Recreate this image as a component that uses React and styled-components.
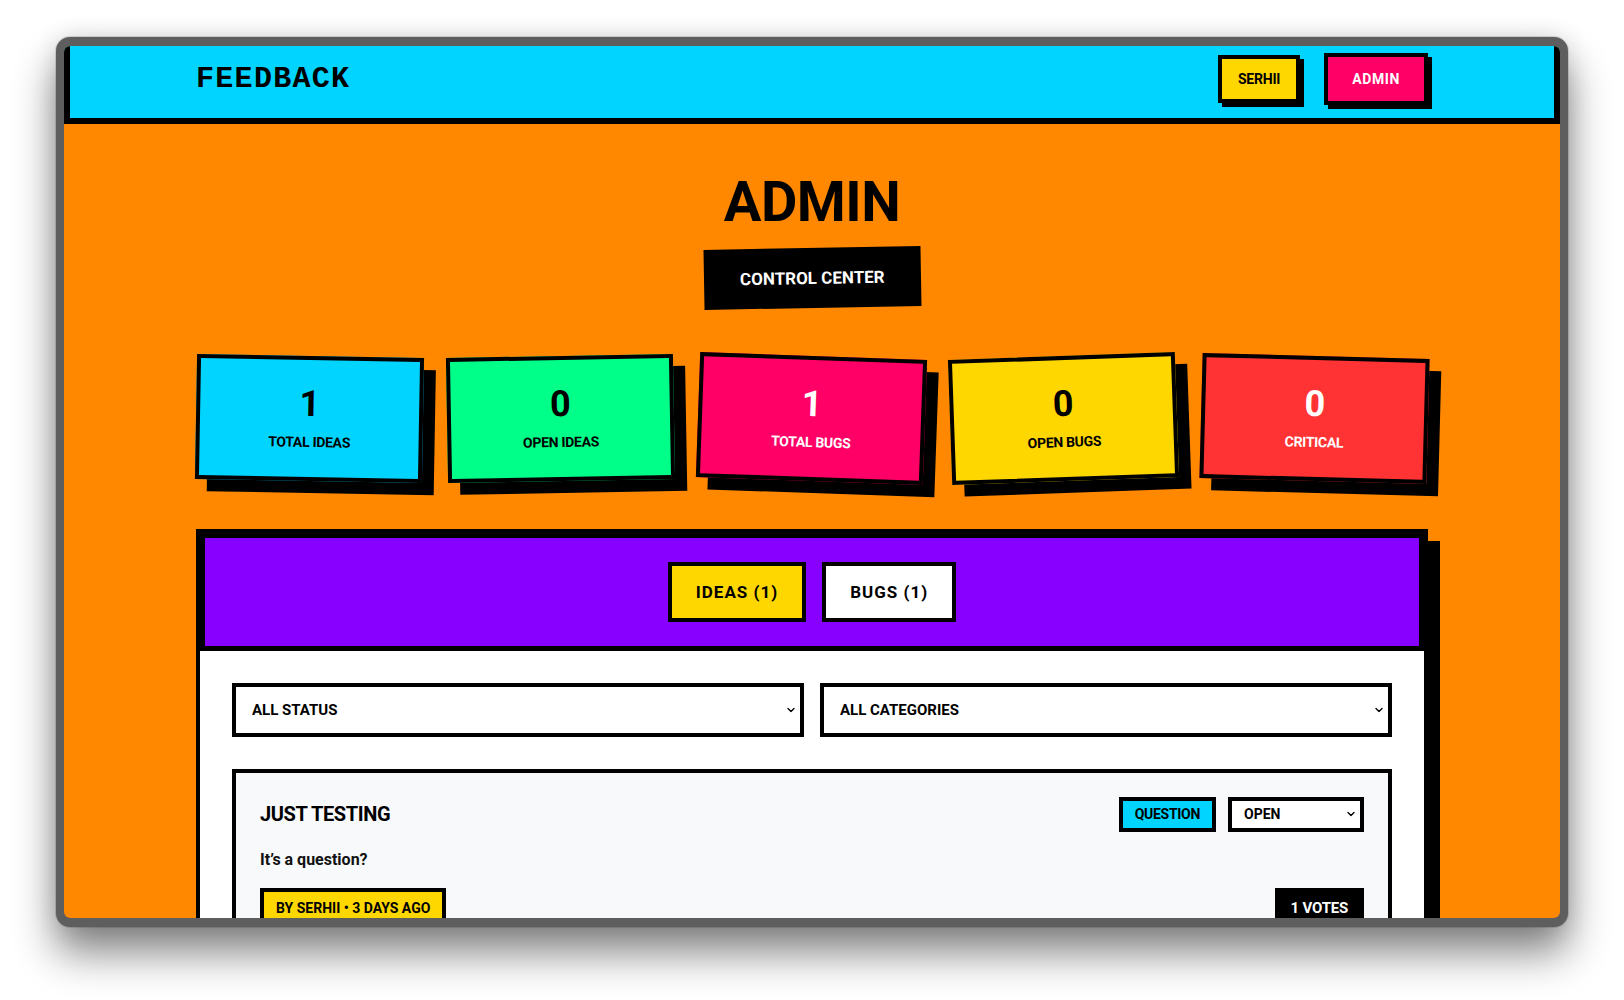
import React from 'react';
import styled, { createGlobalStyle } from 'styled-components';

const SANS = 'Roboto, "Liberation Sans", Arial, sans-serif';
const MONO = '"Liberation Mono", "DejaVu Sans Mono", monospace';

const GlobalStyle = createGlobalStyle`
  html, body {
    margin: 0;
    background: #ffffff;
  }
  * {
    box-sizing: border-box;
  }
`;

const stats = [
  { value: 1, label: 'Total Ideas', bg: '#00d4ff', fg: '#000', tilt: 1 },
  { value: 0, label: 'Open Ideas', bg: '#00ff88', fg: '#000', tilt: -1 },
  { value: 1, label: 'Total Bugs', bg: '#ff0066', fg: '#fff', tilt: 2 },
  { value: 0, label: 'Open Bugs', bg: '#ffd700', fg: '#000', tilt: -2 },
  { value: 0, label: 'Critical', bg: '#ff3333', fg: '#fff', tilt: 1.5 },
];

const ChevronIcon = () => (
  <svg width="8" height="5" viewBox="0 0 8 5" fill="none">
    <path d="M1 1l3 3 3-3" stroke="#000" strokeWidth="1.4" strokeLinecap="round" strokeLinejoin="round" />
  </svg>
);

const App = () => (
  <Page>
    <GlobalStyle />
    <Window>
      <Screen>
        <Header>
          <Container>
            <HeaderRow>
              <Logo>FEEDBACK</Logo>
              <Nav>
                <NavButton>SERHII</NavButton>
                <NavButton $admin>ADMIN</NavButton>
              </Nav>
            </HeaderRow>
          </Container>
        </Header>

        <Main>
          <Container>
            <Hero>
              <Title>ADMIN</Title>
              <Subtitle>CONTROL CENTER</Subtitle>
            </Hero>

            <StatsGrid>
              {stats.map((s) => (
                <StatCard key={s.label} $bg={s.bg} $fg={s.fg} $tilt={s.tilt}>
                  <StatNumber>{s.value}</StatNumber>
                  <StatLabel>{s.label}</StatLabel>
                </StatCard>
              ))}
            </StatsGrid>

            <Panel>
              <TabBar>
                <Tab $active>IDEAS (1)</Tab>
                <Tab>BUGS (1)</Tab>
              </TabBar>

              <PanelBody>
                <Filters>
                  <SelectWrap>
                    <Select defaultValue="all">
                      <option value="all">ALL STATUS</option>
                      <option value="open">OPEN</option>
                    </Select>
                    <Chevron>
                      <ChevronIcon />
                    </Chevron>
                  </SelectWrap>
                  <SelectWrap>
                    <Select defaultValue="all">
                      <option value="all">ALL CATEGORIES</option>
                      <option value="question">QUESTION</option>
                    </Select>
                    <Chevron>
                      <ChevronIcon />
                    </Chevron>
                  </SelectWrap>
                </Filters>

                <ItemCard>
                  <ItemHeader>
                    <ItemTitle>JUST TESTING</ItemTitle>
                    <ItemActions>
                      <CategoryBadge>QUESTION</CategoryBadge>
                      <SelectWrap $small>
                        <Select $small defaultValue="open">
                          <option value="open">OPEN</option>
                          <option value="done">DONE</option>
                        </Select>
                        <Chevron>
                          <ChevronIcon />
                        </Chevron>
                      </SelectWrap>
                    </ItemActions>
                  </ItemHeader>
                  <Description>It’s a question?</Description>
                  <ItemFooter>
                    <MetaBadge>BY SERHII • 3 DAYS AGO</MetaBadge>
                    <VotesBadge>1 VOTES</VotesBadge>
                  </ItemFooter>
                </ItemCard>
              </PanelBody>
            </Panel>
          </Container>
        </Main>
      </Screen>
    </Window>
  </Page>
);

const Page = styled.div`
  min-height: 100vh;
  padding: 37px 56px 0;
  font-family: ${SANS};
`;

const Window = styled.div`
  height: 890px;
  border: solid #5e5e5e;
  border-width: 9px 8px;
  border-radius: 14px;
  background: #5e5e5e;
  box-shadow: 0 26px 42px rgba(0, 0, 0, 0.48), 0 0 24px rgba(0, 0, 0, 0.12),
    0 0 0 1px rgba(0, 0, 0, 0.12);
  overflow: hidden;
`;

const Screen = styled.div`
  height: 100%;
  border-radius: 6px;
  overflow: hidden;
  background: #ff8800;
`;

const Header = styled.header`
  height: 78px;
  padding-bottom: 7px;
  display: flex;
  align-items: center;
  background: #00d4ff;
  border: 6px solid #000;
  border-top: none;
`;

const Container = styled.div`
  width: 100%;
  max-width: 1280px;
  margin: 0 auto;
  padding: 0 24px;
`;

const HeaderRow = styled.div`
  display: flex;
  align-items: center;
  justify-content: space-between;
`;

const Logo = styled.div`
  font-family: ${MONO};
  font-size: 30px;
  font-weight: 700;
  letter-spacing: 1.3px;
  color: #000;
`;

const Nav = styled.nav`
  display: flex;
  align-items: center;
  gap: 24px;
`;

const NavButton = styled.button`
  border: 4px solid #000;
  box-shadow: 4px 4px 0 #000;
  background: ${(p) => (p.$admin ? '#ff0066' : '#ffd700')};
  color: ${(p) => (p.$admin ? '#fff' : '#000')};
  font-family: ${SANS};
  font-size: 14px;
  font-weight: 700;
  letter-spacing: ${(p) => (p.$admin ? '0.6px' : '-0.2px')};
  line-height: 16px;
  padding: ${(p) => (p.$admin ? '14px 24px' : '12px 16px')};
  cursor: pointer;
`;

const Main = styled.main`
  padding: 50px 0 48px;
`;

const Hero = styled.div`
  display: flex;
  flex-direction: column;
  align-items: center;
`;

const Title = styled.h1`
  margin: 0 0 18px;
  font-size: 56px;
  line-height: 56px;
  font-weight: 700;
  letter-spacing: -0.5px;
  color: #000;
`;

const Subtitle = styled.div`
  background: #000;
  color: #fff;
  padding: 20px 36px;
  font-size: 17px;
  line-height: 20px;
  font-weight: 700;
  transform: rotate(-1deg);
`;

const StatsGrid = styled.div`
  display: grid;
  grid-template-columns: repeat(5, 1fr);
  gap: 24px;
  margin-top: 48px;
`;

const StatCard = styled.div`
  background: ${(p) => p.$bg};
  color: ${(p) => p.$fg};
  border: 4px solid #000;
  box-shadow: 12px 12px 0 #000;
  padding: 26px 16px;
  text-align: center;
  transform: rotate(${(p) => p.$tilt}deg);
`;

const StatNumber = styled.div`
  font-size: 36px;
  line-height: 36px;
  font-weight: 700;
`;

const StatLabel = styled.div`
  margin-top: 12px;
  font-size: 14px;
  line-height: 16.8px;
  font-weight: 700;
  text-transform: uppercase;
  letter-spacing: -0.3px;
`;

const Panel = styled.section`
  margin-top: 48px;
  background: #fff;
  border: 4px solid #000;
  box-shadow: 12px 12px 0 #000;
`;

const TabBar = styled.div`
  display: flex;
  justify-content: center;
  gap: 16px;
  padding: 24px;
  background: #8800ff;
  border: 5px solid #000;
`;

const Tab = styled.button`
  border: 4px solid #000;
  background: ${(p) => (p.$active ? '#ffd700' : '#fff')};
  color: #000;
  font-family: ${SANS};
  font-size: 17px;
  line-height: 16px;
  font-weight: 700;
  letter-spacing: 1px;
  padding: 18px 24px;
  cursor: pointer;
`;

const PanelBody = styled.div`
  padding: 32px;
`;

const Filters = styled.div`
  display: grid;
  grid-template-columns: 1fr 1fr;
  gap: 16px;
  margin-bottom: 32px;
`;

const SelectWrap = styled.div`
  position: relative;
  width: ${(p) => (p.$small ? '136px' : 'auto')};
`;

const Select = styled.select`
  appearance: none;
  -webkit-appearance: none;
  display: block;
  width: 100%;
  height: ${(p) => (p.$small ? '35px' : '54px')};
  border: 4px solid #000;
  border-radius: 0;
  background: #fff;
  color: #000;
  font-family: ${SANS};
  font-size: ${(p) => (p.$small ? '14px' : '15px')};
  font-weight: 700;
  padding: ${(p) => (p.$small ? '0 24px 0 12px' : '0 28px 0 16px')};
  outline: none;
`;

const Chevron = styled.span`
  position: absolute;
  right: 9px;
  top: 50%;
  display: flex;
  transform: translateY(-50%);
  pointer-events: none;
`;

const ItemCard = styled.article`
  background: #f8f9fa;
  border: 4px solid #000;
  padding: 24px;
`;

const ItemHeader = styled.div`
  display: flex;
  align-items: center;
  justify-content: space-between;
`;

const ItemTitle = styled.h3`
  margin: 0;
  font-size: 20px;
  line-height: 22px;
  font-weight: 700;
  letter-spacing: -0.4px;
  color: #000;
`;

const ItemActions = styled.div`
  display: flex;
  align-items: center;
  gap: 12px;
`;

const CategoryBadge = styled.span`
  background: #00d4ff;
  border: 4px solid #000;
  padding: 6px 12px;
  font-size: 14px;
  line-height: 15px;
  font-weight: 700;
  letter-spacing: -0.3px;
  color: #000;
`;

const Description = styled.p`
  margin: 16px 0;
  font-size: 16px;
  line-height: 24px;
  font-weight: 700;
  color: #111;
`;

const ItemFooter = styled.div`
  display: flex;
  align-items: center;
  justify-content: space-between;
`;

const MetaBadge = styled.span`
  background: #ffd700;
  border: 4px solid #000;
  padding: 8px 12px;
  font-size: 14px;
  line-height: 16.8px;
  font-weight: 700;
  letter-spacing: 0;
  color: #000;
`;

const VotesBadge = styled.span`
  background: #000;
  border: 4px solid #000;
  padding: 8px 12px;
  font-size: 15px;
  line-height: 16.8px;
  font-weight: 700;
  letter-spacing: -0.2px;
  color: #fff;
`;

export default App;
